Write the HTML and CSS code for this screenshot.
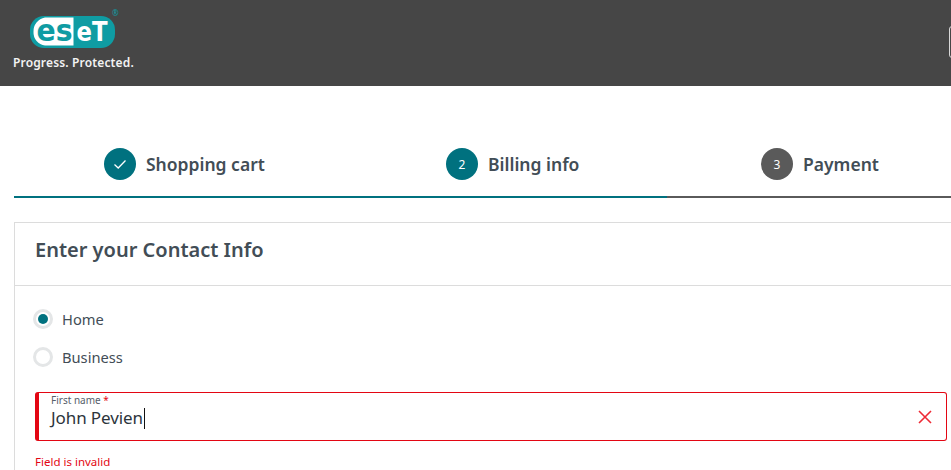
FILE: index.html
```html
<!DOCTYPE html>
<html lang="en">
<head>
    <meta charset="UTF-8">
    <meta name="viewport" content="width=device-width, initial-scale=1.0">
    <link rel="stylesheet" href="styles.css">
    <title>Checkout</title>
</head>
<body>
    <header class="topbar">
        <div class="brand">
            <svg class="logo" width="100" height="42" viewBox="0 0 100 42">
                <rect x="17" y="6" width="85" height="32" rx="14" fill="#0f9ca3"/>
                <path d="M32 7.500H60.500V35.500H32A13 13 0 0 1 20.500 22 14 14 0 0 1 32 7.500Z" fill="#fff"/>
                <text class="logo-dark" x="23.500" y="31" textLength="36" lengthAdjust="spacingAndGlyphs">es</text>
                <text class="logo-light" x="63.500" y="31" textLength="31" lengthAdjust="spacingAndGlyphs">eT</text>
                <text class="logo-reg" x="99" y="6">®</text>
            </svg>
            <div class="tagline">Progress. Protected.</div>
        </div>
        <div class="top-button"></div>
    </header>

    <main class="page">
        <nav class="steps">
            <div class="step">
                <span class="step-num done">
                    <svg width="14" height="14" viewBox="0 0 14 14"><path d="M1.500 7.500L5.200 11 12.500 3.500" fill="none" stroke="#fff" stroke-width="1.300"/></svg>
                </span>
                <span class="step-name">Shopping cart</span>
            </div>
            <div class="step">
                <span class="step-num done">2</span>
                <span class="step-name">Billing info</span>
            </div>
            <div class="step">
                <span class="step-num todo">3</span>
                <span class="step-name">Payment</span>
            </div>
        </nav>
        <div class="progress">
            <div class="progress-done"></div>
            <div class="progress-rest"></div>
        </div>

        <section class="card">
            <h2 class="card-title">Enter your Contact Info</h2>
            <div class="card-body">
                <label class="radio">
                    <span class="radio-dot checked"></span>
                    Home
                </label>
                <label class="radio">
                    <span class="radio-dot"></span>
                    Business
                </label>

                <div class="field">
                    <div class="field-text">
                        <div class="field-label">First name <span class="req">*</span></div>
                        <div class="field-value">John Pevien<span class="caret"></span></div>
                    </div>
                    <svg class="field-clear" width="14" height="14" viewBox="0 0 14 14"><path d="M1 1L13 13M13 1L1 13" fill="none" stroke="#ee2a35" stroke-width="1.600"/></svg>
                </div>
                <div class="field-error">Field is invalid</div>
            </div>
        </section>
    </main>
</body>
</html>
```

FILE: styles.css
```css
html, body {
    margin: 0;
    height: 470px;
    overflow: hidden;
}

body {
    background: #fff;
    color: #424d56;
    font-family: "Noto Sans", "Open Sans", sans-serif;
}

/* top bar */
.topbar {
    display: flex;
    justify-content: space-between;
    align-items: flex-start;
    height: 86px;
    background: #464646;
    padding-left: 13px;
    overflow: hidden;
}

.brand {
    padding-top: 10px;
}

.logo {
    display: block;
    overflow: visible;
}

.logo-dark, .logo-light {
    font-family: "DejaVu Sans", sans-serif;
    font-weight: 700;
}

.logo-dark {
    fill: #0f9ca3;
    font-size: 30px;
}

.logo-light {
    fill: #fff;
    font-size: 27px;
}

.logo-reg {
    fill: #0f9ca3;
    font-size: 8px;
}

.tagline {
    margin-top: 2px;
    color: #f2f2f2;
    font-size: 12px;
    font-weight: 600;
    line-height: 18px;
    letter-spacing: 0.15px;
}

.top-button {
    flex-shrink: 0;
    width: 50px;
    height: 30px;
    margin-top: 26px;
    margin-right: -50px;
    border: 1px solid #d8d8d8;
    border-radius: 3px;
}

/* steps */
.page {
    padding-left: 14px;
    overflow: hidden;
}

.steps {
    display: grid;
    grid-template-columns: 161px 134px auto;
    gap: 181px;
    padding-top: 62px;
    padding-left: 90px;
}

.step {
    display: flex;
    align-items: center;
    gap: 10px;
}

.step-num {
    display: flex;
    align-items: center;
    justify-content: center;
    flex-shrink: 0;
    width: 32px;
    height: 32px;
    border-radius: 50%;
    color: #fff;
    font-size: 12px;
}

.step-num.done {
    background: #00717f;
}

.step-num.todo {
    background: #5a5a5a;
}

.step-name {
    color: #424d56;
    font-size: 17.500px;
    font-weight: 600;
    line-height: 32px;
    white-space: nowrap;
}

.progress {
    display: flex;
    height: 2px;
    margin-top: 16px;
}

.progress-done {
    width: 653px;
    background: #00717f;
}

.progress-rest {
    flex: 1;
    background: #5a5a5a;
}

/* card */
.card {
    margin-top: 24px;
    margin-right: -17px;
    border: 1px solid #dcdcdc;
}

.card-title {
    margin: 0;
    padding: 0 20px;
    height: 62px;
    border-bottom: 1px solid #dcdcdc;
    font-size: 20px;
    font-weight: 600;
    line-height: 54px;
}

.card-body {
    padding: 14px 20px 0;
}

.radio {
    display: flex;
    align-items: center;
    gap: 9px;
    height: 38px;
    margin-left: -2px;
    font-size: 14.700px;
}

.radio-dot {
    display: flex;
    align-items: center;
    justify-content: center;
    width: 14px;
    height: 14px;
    border: 3px solid #e4e6e7;
    border-radius: 50%;
}

.radio-dot.checked::after {
    content: "";
    width: 10px;
    height: 10px;
    border-radius: 50%;
    background: #00717f;
}

.field {
    display: flex;
    align-items: center;
    justify-content: space-between;
    height: 49px;
    margin-top: 16px;
    box-sizing: border-box;
    border: 1px solid #e30613;
    border-left-width: 4px;
    border-radius: 3px;
    padding: 0 14px 0 12px;
}

.field-text {
    align-self: flex-start;
    padding-top: 1px;
}

.field-label {
    color: #56606a;
    font-size: 10px;
    line-height: 12px;
}

.req {
    color: #e30613;
}

.field-value {
    color: #2c343b;
    font-size: 17px;
    line-height: 23px;
    letter-spacing: -0.1px;
}

.caret {
    display: inline-block;
    width: 1px;
    height: 21px;
    margin-left: 1px;
    background: #111;
    vertical-align: -5px;
}

.field-error {
    margin-top: 13px;
    color: #e30613;
    font-size: 11.500px;
    line-height: 16px;
}
```
